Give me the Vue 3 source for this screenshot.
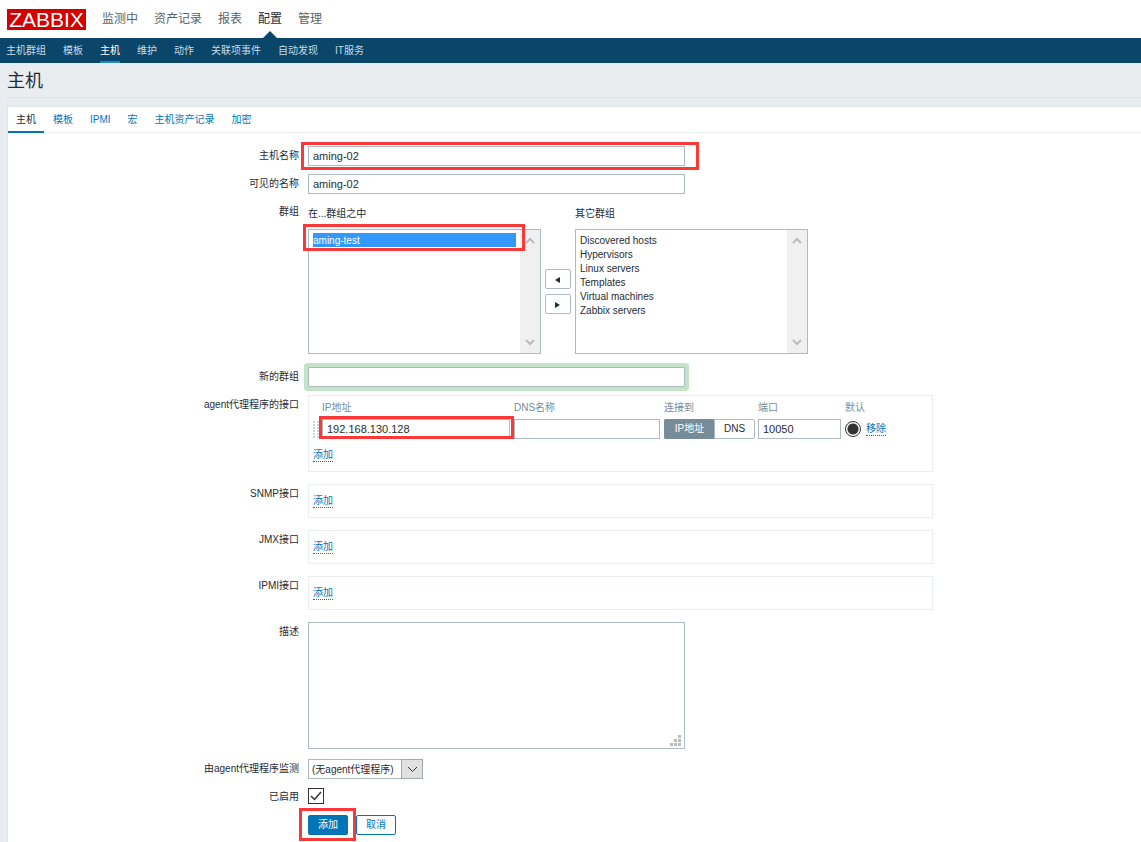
<script setup>
import { ref } from 'vue'

const mainNav = ['监测中', '资产记录', '报表', '配置', '管理']
const subNav = ['主机群组', '模板', '主机', '维护', '动作', '关联项事件', '自动发现', 'IT服务']
const tabs = ['主机', '模板', 'IPMI', '宏', '主机资产记录', '加密']
const otherGroups = ['Discovered hosts', 'Hypervisors', 'Linux servers', 'Templates', 'Virtual machines', 'Zabbix servers']
const extraInterfaces = ['SNMP接口', 'JMX接口', 'IPMI接口']

const hostName = ref('aming-02')
const visibleName = ref('aming-02')
const inGroups = ref(['aming-test'])
const others = ref([])
const newGroup = ref('')
const ip = ref('192.168.130.128')
const dns = ref('')
const port = ref('10050')
const connectTo = ref('ip')
const isDefault = ref('1')
const description = ref('')
const enabled = ref(true)
</script>

<template>
  <div class="page">
    <header class="top">
      <a class="logo" href="#">ZABBIX</a>
      <nav class="main-nav">
        <a v-for="n in mainNav" :key="n" href="#" :class="{ active: n === '配置' }">{{ n }}</a>
      </nav>
    </header>
    <nav class="sub-nav">
      <a v-for="n in subNav" :key="n" href="#" :class="{ active: n === '主机' }">{{ n }}</a>
    </nav>
    <h1>主机</h1>

    <main class="panel">
      <nav class="tabs">
        <a v-for="t in tabs" :key="t" href="#" :class="{ active: t === '主机' }">{{ t }}</a>
      </nav>

      <form class="form" @submit.prevent>
        <div class="row">
          <label class="label" for="host">主机名称</label>
          <div class="field wide">
            <input id="host" v-model="hostName" type="text" class="text">
            <span class="mark mark-host"></span>
          </div>
        </div>

        <div class="row">
          <label class="label" for="visible">可见的名称</label>
          <div class="field wide">
            <input id="visible" v-model="visibleName" type="text" class="text">
          </div>
        </div>

        <div class="row groups-row">
          <span class="label">群组</span>
          <div class="field groups">
            <div class="group-col">
              <label class="caption" for="in-groups">在...群组之中</label>
              <div class="listbox">
                <select id="in-groups" v-model="inGroups" multiple>
                  <option>aming-test</option>
                </select>
                <div class="scrollbar">
                  <svg width="10" height="8" viewBox="0 0 10 8"><path d="M1 6l4-4 4 4" /></svg>
                  <svg width="10" height="8" viewBox="0 0 10 8"><path d="M1 2l4 4 4-4" /></svg>
                </div>
                <span class="mark mark-group"></span>
              </div>
            </div>
            <div class="movers">
              <button type="button" aria-label="添加到群组"><svg width="6" height="6" viewBox="0 0 6 6"><path d="M0 3l5-3v6z" /></svg></button>
              <button type="button" aria-label="从群组移除"><svg width="6" height="6" viewBox="0 0 6 6"><path d="M5 3L0 0v6z" /></svg></button>
            </div>
            <div class="group-col">
              <label class="caption" for="other-groups">其它群组</label>
              <div class="listbox">
                <select id="other-groups" v-model="others" multiple>
                  <option v-for="g in otherGroups" :key="g">{{ g }}</option>
                </select>
                <div class="scrollbar">
                  <svg width="10" height="8" viewBox="0 0 10 8"><path d="M1 6l4-4 4 4" /></svg>
                  <svg width="10" height="8" viewBox="0 0 10 8"><path d="M1 2l4 4 4-4" /></svg>
                </div>
              </div>
            </div>
          </div>
        </div>

        <div class="row">
          <label class="label" for="new-group">新的群组</label>
          <div class="field wide">
            <input id="new-group" v-model="newGroup" type="text" class="text highlighted">
          </div>
        </div>

        <div class="row spaced">
          <span class="label">agent代理程序的接口</span>
          <div class="field box agent-box">
            <table>
              <thead>
                <tr>
                  <th class="c-handle"></th>
                  <th class="c-ip">IP地址</th>
                  <th class="c-dns">DNS名称</th>
                  <th class="c-conn">连接到</th>
                  <th class="c-port">端口</th>
                  <th>默认</th>
                </tr>
              </thead>
              <tbody>
                <tr>
                  <td>
                    <svg class="handle" width="6" height="17" viewBox="0 0 6 17">
                      <path v-for="y in [0, 3, 6, 9, 12, 15]" :key="y" :d="`M0 ${y}h2v2h-2zM4 ${y}h2v2h-2z`" />
                    </svg>
                  </td>
                  <td>
                    <div class="cell">
                      <input v-model="ip" type="text" class="text" aria-label="IP地址">
                      <span class="mark mark-ip"></span>
                    </div>
                  </td>
                  <td><input v-model="dns" type="text" class="text" aria-label="DNS名称"></td>
                  <td>
                    <div class="segmented">
                      <button type="button" class="seg-ip" :class="{ on: connectTo === 'ip' }" @click="connectTo = 'ip'">IP地址</button>
                      <button type="button" :class="{ on: connectTo === 'dns' }" @click="connectTo = 'dns'">DNS</button>
                    </div>
                  </td>
                  <td><input v-model="port" type="text" class="text" aria-label="端口"></td>
                  <td>
                    <div class="default-cell">
                      <input v-model="isDefault" type="radio" name="default" value="1" aria-label="默认">
                      <a class="dotted" href="#">移除</a>
                    </div>
                  </td>
                </tr>
              </tbody>
            </table>
            <div class="add-line"><a class="dotted" href="#">添加</a></div>
          </div>
        </div>

        <div v-for="name in extraInterfaces" :key="name" class="row spaced">
          <span class="label">{{ name }}</span>
          <div class="field box">
            <div class="add-line"><a class="dotted" href="#">添加</a></div>
          </div>
        </div>

        <div class="row after-text">
          <label class="label" for="description">描述</label>
          <div class="field wide">
            <textarea id="description" v-model="description"></textarea>
            <svg class="grip" width="11" height="11" viewBox="0 0 11 11">
              <path d="M8 0h3v3H8zM4 4h3v3H4zM8 4h3v3H8zM0 8h3v3H0zM4 8h3v3H4zM8 8h3v3H8z" />
            </svg>
          </div>
        </div>

        <div class="row">
          <label class="label" for="proxy">由agent代理程序监测</label>
          <div class="field dropdown">
            <select id="proxy"><option>(无agent代理程序)</option></select>
            <span class="drop-button">
              <svg width="11" height="7" viewBox="0 0 11 7"><path d="M1 1l4.500 4.500L10 1" /></svg>
            </span>
          </div>
        </div>

        <div class="row enabled-row">
          <label class="label" for="enabled">已启用</label>
          <div class="field check-field">
            <input id="enabled" v-model="enabled" type="checkbox">
            <svg v-if="enabled" class="tick" width="12" height="10" viewBox="0 0 12 10"><path d="M1 5l3.500 3.500L11 1" /></svg>
          </div>
        </div>

        <div class="row">
          <span class="label"></span>
          <div class="field actions">
            <button type="submit" class="primary">添加</button>
            <button type="button">取消</button>
            <span class="mark mark-submit"></span>
          </div>
        </div>
      </form>
    </main>
  </div>
</template>

<style>
body {
  margin: 0;
  background: #e9edf0;
}
</style>

<style scoped>
* {
  box-sizing: border-box;
}

.page {
  display: flex;
  flex-direction: column;
  min-height: 100vh;
  font: 10px/20px "Liberation Sans", "Noto Sans CJK SC", sans-serif;
  color: #1f2c33;
}

input,
select,
textarea,
button {
  margin: 0;
  font-family: inherit;
  color: inherit;
}

a {
  color: #0275b8;
  text-decoration: none;
}

.top {
  display: flex;
  align-items: center;
  gap: 16px;
  height: 38px;
  padding-left: 7px;
  background: #fff;
}

.logo {
  display: flex;
  justify-content: center;
  width: 79px;
  height: 21px;
  background: #d40000;
  color: #fff;
  font-size: 21px;
  line-height: 22px;
}

.main-nav {
  display: flex;
  gap: 16px;
  height: 100%;
  font-size: 12px;
  line-height: 38px;
}

.main-nav a {
  position: relative;
  color: #5a6468;
}

.main-nav .active {
  color: #1f2c33;
}

.main-nav .active::after {
  content: "";
  position: absolute;
  left: 5px;
  bottom: 0;
  border: 7px solid transparent;
  border-top: 0;
  border-bottom-color: #0a466a;
}

.sub-nav {
  display: flex;
  gap: 17px;
  height: 25px;
  padding-left: 6px;
  background: #0a466a;
  line-height: 26px;
}

.sub-nav a {
  height: 25px;
  color: #c6dbe6;
}

.sub-nav .active {
  border-bottom: 2px solid #1f86c8;
  color: #fff;
}

h1 {
  height: 35px;
  margin: 0 0 8px 7px;
  border-bottom: 1px solid #dfe4e7;
  font-size: 18px;
  font-weight: 400;
  line-height: 36px;
}

.panel {
  flex: 1;
  margin-left: 7px;
  border: solid #dfe4e7;
  border-width: 1px 0 0 1px;
  background: #fff;
}

.tabs {
  display: flex;
  gap: 1px;
  height: 26px;
  border-bottom: 1px solid #ebeef0;
  line-height: 26px;
}

.tabs a {
  height: 26px;
  padding: 0 8px;
}

.tabs .active {
  border-bottom: 2px solid #0275b8;
  color: #1f2c33;
}

.form {
  padding-top: 13px;
}

.row {
  display: flex;
  gap: 9px;
  margin-bottom: 8px;
}

.row.spaced {
  margin-bottom: 12px;
}

.row.groups-row {
  margin-bottom: 13px;
}

.row.after-text,
.row.enabled-row {
  margin-bottom: 10px;
}

.label {
  flex: none;
  width: 291px;
  text-align: right;
}

.field {
  position: relative;
}

.wide {
  width: 377px;
}

.text {
  display: block;
  width: 100%;
  height: 20px;
  padding: 0 4px;
  border: 1px solid #acbbc2;
  background: #fff;
  font-size: 11px;
  outline: none;
}

.highlighted {
  border-radius: 1px;
  box-shadow: 0 0 0 4px #c5e3c8;
}

/* Red callout frames laid over the fields they point at */
.mark {
  position: absolute;
  border: 3px solid #fb3838;
  pointer-events: none;
}

.mark-host {
  inset: -4px -14px -4px -7px;
}

.mark-group {
  top: -6px;
  left: -6px;
  width: 222px;
  height: 27px;
}

.mark-ip {
  inset: -3px -4px 0 -3px;
}

.mark-submit {
  top: -7px;
  left: -9px;
  width: 57px;
  height: 33px;
}

.groups {
  display: flex;
  gap: 4px;
}

.caption {
  display: block;
  height: 27px;
  line-height: 24px;
}

.listbox {
  position: relative;
  display: flex;
  width: 233px;
  height: 125px;
  border: 1px solid #acbbc2;
}

.listbox select {
  flex: 1;
  min-width: 0;
  height: 100%;
  padding: 3px 4px;
  border: 0;
  background: #fff;
  font-size: 10px;
  outline: none;
  overflow: hidden;
}

.listbox option {
  height: 14px;
  min-height: 14px;
  padding: 2px 0 0;
}

.listbox option:checked {
  background: #39f linear-gradient(#39f, #39f);
  color: #fff;
  -webkit-text-fill-color: #fff;
}

.scrollbar {
  display: flex;
  flex-direction: column;
  justify-content: space-between;
  align-items: center;
  width: 20px;
  padding: 7px 0;
  background: #f0f0f0;
}

.scrollbar path {
  fill: none;
  stroke: #bcbcbc;
  stroke-width: 2;
}

.movers {
  display: flex;
  flex-direction: column;
  gap: 5px;
  width: 26px;
  padding-top: 67px;
}

.movers button {
  display: flex;
  align-items: center;
  justify-content: center;
  height: 20px;
  padding: 2px 0 0;
  border: 1px solid #acbbc2;
  border-radius: 2px;
  background: #fff;
}

.movers path {
  fill: #1f2c33;
}

.box {
  width: 625px;
  padding: 6px 4px;
  border: 1px solid #ebeef0;
}

.agent-box {
  padding-top: 0;
}

table {
  width: 100%;
  margin-bottom: 6px;
  border-collapse: collapse;
  table-layout: fixed;
}

th {
  height: 23px;
  padding: 0;
  color: #768d99;
  font-weight: 400;
  text-align: left;
}

td {
  height: 20px;
  padding: 0 4px 0 0;
}

td:first-child {
  padding: 0;
}

.c-handle {
  width: 9px;
}

.c-ip {
  width: 192px;
}

.c-dns {
  width: 150px;
}

.c-conn {
  width: 94px;
}

.c-port {
  width: 87px;
}

.handle {
  display: block;
  fill: #ccd4d8;
}

.cell {
  position: relative;
}

.segmented {
  display: flex;
  width: 91px;
  height: 20px;
}

.segmented button {
  flex: 1;
  padding: 0;
  border: 1px solid #acbbc2;
  border-radius: 0 2px 2px 0;
  background: #fff;
  font-size: 10px;
  line-height: 18px;
}

.segmented .seg-ip {
  flex: none;
  width: 50px;
  border-right: 0;
  border-radius: 2px 0 0 2px;
}

.segmented .on {
  border-color: #768d99;
  background: #768d99;
  color: #fff;
}

.default-cell {
  display: flex;
  align-items: center;
  gap: 5px;
}

input[type="radio"] {
  appearance: none;
  width: 16px;
  height: 16px;
  border: 1px solid #333;
  border-radius: 50%;
  background: #fff;
}

input[type="radio"]:checked {
  background: radial-gradient(circle, #333 5px, #fff 6px);
}

.dotted {
  display: block;
  border-bottom: 1px dotted #0275b8;
  line-height: 13px;
}

.add-line {
  display: flex;
  align-items: center;
  height: 20px;
}

textarea {
  display: block;
  width: 100%;
  height: 127px;
  padding: 4px;
  border: 1px solid #acbbc2;
  background: #fff;
  font-size: 11px;
  resize: none;
  outline: none;
}

.grip {
  position: absolute;
  right: 4px;
  bottom: 3px;
  fill: #bcbcbc;
}

.dropdown select {
  appearance: none;
  display: block;
  width: 115px;
  height: 20px;
  padding: 0 22px 0 3px;
  border: 1px solid #acbbc2;
  border-radius: 0;
  background: #fff;
  font-size: 10px;
}

.drop-button {
  position: absolute;
  top: 0;
  right: 0;
  display: flex;
  align-items: center;
  justify-content: center;
  width: 22px;
  height: 20px;
  border: 1px solid #a0a8ac;
  background: #e1e1e1;
  pointer-events: none;
}

.drop-button path,
.tick path {
  fill: none;
  stroke: #333;
}

.tick path {
  stroke-width: 1.5;
}

.enabled-row {
  height: 18px;
  line-height: 20px;
}

.check-field {
  display: flex;
  align-items: center;
}

input[type="checkbox"] {
  appearance: none;
  width: 16px;
  height: 16px;
  border: 1px solid #333;
  background: #fff;
}

.tick {
  position: absolute;
  top: 4px;
  left: 2px;
  pointer-events: none;
}

.actions {
  display: flex;
  gap: 8px;
}

.actions button {
  height: 20px;
  padding: 0 9px;
  border: 1px solid #0275b8;
  border-radius: 2px;
  background: #fff;
  color: #0275b8;
  font-size: 10px;
  line-height: 18px;
}

.actions .primary {
  background: #0275b8;
  color: #fff;
}
</style>
